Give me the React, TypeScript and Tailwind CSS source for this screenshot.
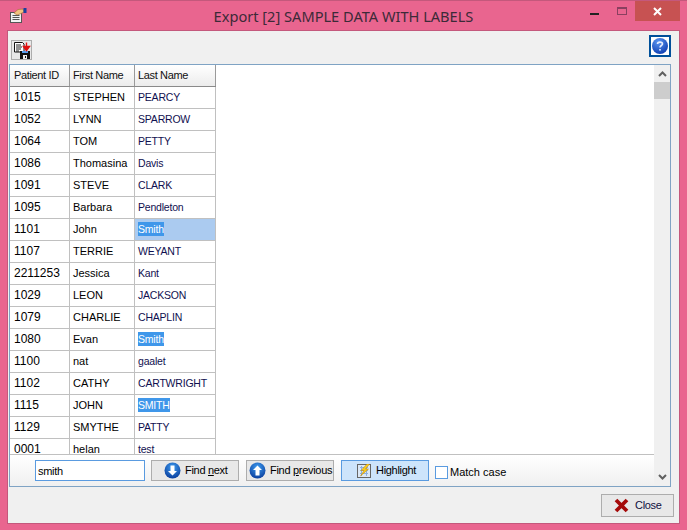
import React from "react";

const rows: [string, string, string, boolean?][] = [
  ["1015", "STEPHEN", "PEARCY"],
  ["1052", "LYNN", "SPARROW"],
  ["1064", "TOM", "PETTY"],
  ["1086", "Thomasina", "Davis"],
  ["1091", "STEVE", "CLARK"],
  ["1095", "Barbara", "Pendleton"],
  ["1101", "John", "Smith", true],
  ["1107", "TERRIE", "WEYANT"],
  ["2211253", "Jessica", "Kant"],
  ["1029", "LEON", "JACKSON"],
  ["1079", "CHARLIE", "CHAPLIN"],
  ["1080", "Evan", "Smith", true],
  ["1100", "nat", "gaalet"],
  ["1102", "CATHY", "CARTWRIGHT"],
  ["1115", "JOHN", "SMITH", true],
  ["1129", "SMYTHE", "PATTY"],
  ["0001", "helan", "test"],
];

function RoundArrow({ up }: { up?: boolean }) {
  return (
    <svg width="17" height="17" viewBox="0 0 17 17" className="shrink-0">
      <defs>
        <radialGradient id={up ? "ga" : "gb"} cx="50%" cy="30%" r="70%">
          <stop offset="0" stopColor="#3f9cf0" />
          <stop offset="1" stopColor="#0a3f9e" />
        </radialGradient>
      </defs>
      <circle cx="8.5" cy="8.5" r="8" fill={`url(#${up ? "ga" : "gb"})`} />
      <path
        d={up ? "M8.5 3.5 L13 8 L10.5 8 L10.5 13.5 L6.5 13.5 L6.5 8 L4 8 Z" : "M8.5 13.5 L13 9 L10.5 9 L10.5 3.5 L6.5 3.5 L6.5 9 L4 9 Z"}
        fill="#fff"
      />
    </svg>
  );
}

export default function App() {
  return (
    <div
      className="w-[687px] h-[530px] bg-[#e9658f] flex flex-col overflow-hidden border-t border-[#c4587c] text-[11px] text-black"
      style={{ fontFamily: '"Liberation Sans", Arial, sans-serif' }}
    >
      <div className="h-[30px] flex items-center relative shrink-0">
        <svg width="18" height="16" viewBox="0 0 18 16" className="ml-[9px] -mt-[1px]">
          <rect x="1.5" y="4.5" width="11" height="10" fill="#f2f2f2" stroke="#555" />
          <path d="M3.5 7.5h7M3.5 9.5h7M3.5 11.5h7" stroke="#555" />
          <path d="M5 5 L9 1.5 L14 1 L15 4 L11 6 L8 7 Z" fill="#f3c27e" stroke="#9a6a30" strokeWidth="0.6" />
          <rect x="14.5" y="0" width="3" height="5" fill="#1a3fa0" />
        </svg>
        <div className="absolute left-0 right-0 top-[6px] text-center text-[14.6px] leading-[18px] text-[#3c2a38]" style={{ fontFamily: '"Noto Sans", sans-serif' }}>
          Export [2] SAMPLE DATA WITH LABELS
        </div>
        <div className="ml-auto flex items-start h-full">
          <div className="w-[9px] h-[2px] bg-[#222] mt-[12px] mr-[18px]" />
          <div className="w-[10px] h-[8px] border border-[#8a4060] border-t-2 mt-[6px] mr-[8px]" />
          <div className="w-[45px] h-[20px] bg-[#c75252] flex items-center justify-center mr-[7px]">
            <svg width="9" height="9" viewBox="0 0 9 9">
              <path d="M1 1 L8 8 M8 1 L1 8" stroke="#fff" strokeWidth="2" />
            </svg>
          </div>
        </div>
      </div>

      <div className="mx-[8px] flex-1 bg-[#f0f0f0] flex flex-col mb-[7px] min-h-0 outline-1 outline-[#c4587c]">
        <div className="h-[33px] shrink-0 flex items-start justify-between pl-[3px] pr-[8px]">
          <div className="mt-[9px] w-[21px] h-[20px] border border-[#adadad] bg-[#e8e8e8] flex items-center justify-center">
            <svg width="18" height="18" viewBox="0 0 18 18">
              <path d="M1.5 1.5h8l1.5 1.5v8h-9.5z" fill="#fff" stroke="#111" />
              <path d="M3 4h5M3 6h6M3 8h5M3 10h3" stroke="#222" />
              <rect x="7" y="10" width="10" height="8" fill="#111" />
              <rect x="9" y="10" width="6" height="2" fill="#5aa0f0" />
              <rect x="10" y="14" width="4" height="4" fill="#eee" />
              <rect x="12" y="15" width="1" height="2" fill="#111" />
              <path d="M13.5 1.5v5M10.5 5.5 L13.5 9.5 L16.5 5.5 Z" stroke="#e01010" strokeWidth="1.4" fill="#e01010" />
            </svg>
          </div>
          <div className="mt-[4px] w-[22px] h-[22px] border-[2px] border-[#00509a] bg-white flex items-center justify-center">
            <svg width="16" height="16" viewBox="0 0 16 16">
              <defs>
                <radialGradient id="gh" cx="40%" cy="25%" r="80%">
                  <stop offset="0" stopColor="#5a96f0" />
                  <stop offset="1" stopColor="#0d3cb0" />
                </radialGradient>
              </defs>
              <circle cx="8" cy="8" r="8" fill="url(#gh)" />
              <path d="M5.5 6 C5.5 3.5 10.5 3.5 10.5 6 C10.5 7.5 8 7.5 8 9.5" fill="none" stroke="#e4ecff" strokeWidth="1.6" />
              <rect x="7.2" y="11" width="1.6" height="1.6" fill="#e4ecff" />
            </svg>
          </div>
        </div>

        <div className="ml-[1px] mr-[8px] h-[423px] shrink-0 border border-[#7fa3c4] bg-white flex overflow-hidden">
          <div className="flex-1 flex flex-col min-w-0">
            <div className="flex-1 min-h-0 overflow-hidden">
              <div className="w-[206px] flex flex-col">
                <div className="flex h-[22px] shrink-0 border-b border-[#8a8a8a] bg-gradient-to-b from-white to-[#ececec] text-[11px] tracking-[-0.35px] text-[#111]">
                  <div className="w-[60px] pl-[4px] border-r border-[#9a9a9a] leading-[20px]">Patient ID</div>
                  <div className="w-[65px] pl-[3px] border-r border-[#9a9a9a] leading-[20px]">First Name</div>
                  <div className="w-[81px] pl-[3px] border-r border-[#9a9a9a] leading-[20px]">Last Name</div>
                </div>
                {rows.map((r) => (
                  <div key={r[0]} className="flex h-[22px] shrink-0 border-b border-[#c0c0c0] leading-[20px]">
                    <div className="w-[60px] pl-[4px] border-r border-[#c0c0c0] text-[12px] leading-[20px]">{r[0]}</div>
                    <div className="w-[65px] pl-[3px] border-r border-[#c0c0c0] leading-[20px]">{r[1]}</div>
                    <div className={`w-[81px] pl-[3px] border-r border-[#c0c0c0] text-[10.5px] tracking-[-0.2px] text-[#101050] leading-[21px] ${r[0] === "1101" ? "bg-[#abcbf0]" : ""}`}>
                      {r[3] ? <span className="bg-[#3f97ea] text-white inline-block leading-[14px]">{r[2]}</span> : r[2]}
                    </div>
                  </div>
                ))}
              </div>
            </div>
            <div className="h-[32px] shrink-0 border-t border-[#c0c0c0] bg-gradient-to-b from-white to-[#f0f0f0] flex items-center pl-[25px] text-[11px] tracking-[-0.3px]">
              <input
                readOnly
                value="smith"
                className="w-[110px] h-[21px] border border-[#5a9be0] bg-white px-[2px] text-[11px] tracking-[-0.3px] outline-none"
              />
              <div className="ml-[6px] w-[88px] h-[21px] border border-[#adadad] bg-[#e8e8e8] flex items-center pl-[12px] gap-[4px]">
                <RoundArrow />
                <span>Find <u>n</u>ext</span>
              </div>
              <div className="ml-[7px] w-[88px] h-[21px] border border-[#adadad] bg-[#e8e8e8] flex items-center pl-[2px] gap-[4px]">
                <RoundArrow up />
                <span className="whitespace-nowrap">Find <u>p</u>revious</span>
              </div>
              <div className="ml-[7px] w-[88px] h-[21px] border border-[#5a9be0] bg-[#cde4fb] flex items-center pl-[15px] gap-[5px]">
                <svg width="14" height="14" viewBox="0 0 14 14" className="shrink-0">
                  <rect x="0.5" y="0.5" width="13" height="13" fill="#dce8f6" stroke="#666" />
                  <path d="M3 3.5h8M3 6.5h8M3 9.5h8M4.5 2v10M9.5 2v10" stroke="#8ab0e0" />
                  <path d="M10 0 L4 6.5 L7 6.5 L3.5 12 L11.5 5 L8.5 5 L12.5 0 Z" fill="#f7cc1e" stroke="#c08000" strokeWidth="0.5" />
                </svg>
                <span>Highlight</span>
              </div>
              <div className="ml-[6px] mt-[4px] w-[13px] h-[13px] border border-[#5a9be0] bg-white shrink-0" />
              <span className="ml-[2px] mt-[4px] tracking-normal">Match case</span>
            </div>
          </div>
          <div className="w-[16px] shrink-0 bg-[#f0f0f0] flex flex-col items-center justify-between">
            <div className="w-full flex flex-col">
              <div className="h-[17px] flex items-center justify-center">
                <svg width="9" height="6" viewBox="0 0 9 6"><path d="M1 5 L4.5 1.5 L8 5" fill="none" stroke="#606060" strokeWidth="2" /></svg>
              </div>
              <div className="h-[17px] bg-[#cdcdcd]" />
            </div>
            <div className="h-[17px] flex items-center justify-center mb-[1px]">
              <svg width="9" height="6" viewBox="0 0 9 6"><path d="M1 1 L4.5 4.5 L8 1" fill="none" stroke="#606060" strokeWidth="2" /></svg>
            </div>
          </div>
        </div>

        <div className="flex-1 flex items-center justify-end pr-[5px]">
          <div className="w-[73px] h-[23px] border border-[#adadad] bg-[#e8e8e8] flex items-center pl-[12px] gap-[6px] text-[11px] tracking-[-0.3px] text-[#101040]">
            <svg width="15" height="15" viewBox="0 0 15 15" className="shrink-0">
              <path d="M2 2 L13 13 M13 2 L2 13" stroke="#a50a0a" strokeWidth="3.8" />
            </svg>
            <span>Close</span>
          </div>
        </div>
      </div>
    </div>
  );
}
